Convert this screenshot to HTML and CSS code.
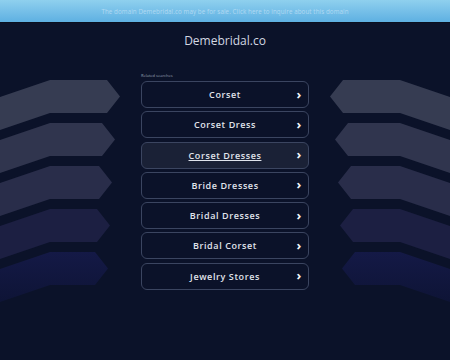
FILE: index.html
```html
<!DOCTYPE html>
<html lang="en">

<head>
    <meta charset="UTF-8">
    <title>Demebridal.co</title>
    <link rel="stylesheet" href="styles.css">
</head>

<body>

    <svg class="bands" viewBox="0 0 450 360" width="450" height="360" aria-hidden="true">
        <defs>
            <linearGradient id="fade" x1="0" y1="0" x2="0" y2="1">
                <stop offset="0" stop-color="#141946" />
                <stop offset="1" stop-color="#0e1436" />
            </linearGradient>
        </defs>
        <g class="left">
            <polygon fill="#363c52" points="0,97 50,80 107,80 120,96.5 107,113 50,113 0,130" />
            <polygon fill="#30354e" points="0,140 50,123 102,123 115,139.5 102,156 50,156 0,173" />
            <polygon fill="#292d4a" points="0,183 50,166 99,166 112,182.5 99,199 50,199 0,216" />
            <polygon fill="#1c1f42" points="0,226 50,209 97,209 110,225.5 97,242 50,242 0,259" />
            <polygon fill="url(#fade)" points="0,269 50,252 95,252 108,268.5 95,285 50,285 0,302" />
        </g>
        <g class="right">
            <polygon fill="#363c52" points="450,97 400,80 343,80 330,96.5 343,113 400,113 450,130" />
            <polygon fill="#30354e" points="450,140 400,123 348,123 335,139.5 348,156 400,156 450,173" />
            <polygon fill="#292d4a" points="450,183 400,166 351,166 338,182.5 351,199 400,199 450,216" />
            <polygon fill="#1c1f42" points="450,226 400,209 353,209 340,225.5 353,242 400,242 450,259" />
            <polygon fill="url(#fade)" points="450,269 400,252 355,252 342,268.5 355,285 400,285 450,302" />
        </g>
    </svg>

    <div class="banner">
        <a href="#">The domain Demebridal.co may be for sale. Click here to inquire about this domain</a>
    </div>

    <h1>Demebridal.co</h1>

    <main class="related">
        <p class="label">Related searches</p>
        <nav class="links">
            <a class="link" href="#">Corset <span class="arrow">&#x203A;</span></a>
            <a class="link" href="#">Corset Dress <span class="arrow">&#x203A;</span></a>
            <a class="link hover" href="#"><u>Corset Dresses</u> <span class="arrow">&#x203A;</span></a>
            <a class="link" href="#">Bride Dresses <span class="arrow">&#x203A;</span></a>
            <a class="link" href="#">Bridal Dresses <span class="arrow">&#x203A;</span></a>
            <a class="link" href="#">Bridal Corset <span class="arrow">&#x203A;</span></a>
            <a class="link" href="#">Jewelry Stores <span class="arrow">&#x203A;</span></a>
        </nav>
    </main>

</body>

</html>
```

FILE: styles.css
```css
body {
    margin: 0;
    width: 450px;
    height: 360px;
    overflow: hidden;
    background-color: #0b1229;
    font-family: "Open Sans", "Liberation Sans", sans-serif;
    position: relative;
}

.bands {
    position: absolute;
    top: 0;
    left: 0;
    z-index: 0;
}

.banner {
    position: relative;
    z-index: 1;
    height: 22px;
    display: flex;
    align-items: center;
    justify-content: center;
    background: linear-gradient(#8fd0ee, #5eb0e2);
    border-bottom: 1px solid #0a0f1e;
}

.banner a {
    color: rgba(235, 245, 255, 0.5);
    font-size: 6.2px;
    letter-spacing: 0.1px;
    text-decoration: none;
}

h1 {
    position: relative;
    z-index: 1;
    margin: 10px 0 0;
    height: 16px;
    line-height: 16px;
    text-align: center;
    font-size: 12px;
    font-weight: 500;
    color: #d3d8e2;
}

.related {
    position: relative;
    z-index: 1;
    width: 168px;
    margin: 24px auto 0;
}

.label {
    margin: 0 0 3px;
    font-size: 4px;
    line-height: 5px;
    color: #9aa3b5;
}

.links {
    display: flex;
    flex-direction: column;
    gap: 3.3px;
}

.link {
    position: relative;
    height: 27px;
    box-sizing: border-box;
    border: 1px solid #3b4560;
    border-radius: 6px;
    display: flex;
    align-items: center;
    justify-content: center;
    color: #e0e4ec;
    font-size: 9px;
    font-weight: 600;
    letter-spacing: 0.6px;
    text-decoration: none;
}

.link.hover {
    background-color: #1a2136;
}

.arrow {
    position: absolute;
    right: 6px;
    top: 50%;
    transform: translateY(-56%);
    font-size: 13px;
    font-weight: 700;
    color: #f2f4f8;
}
```
